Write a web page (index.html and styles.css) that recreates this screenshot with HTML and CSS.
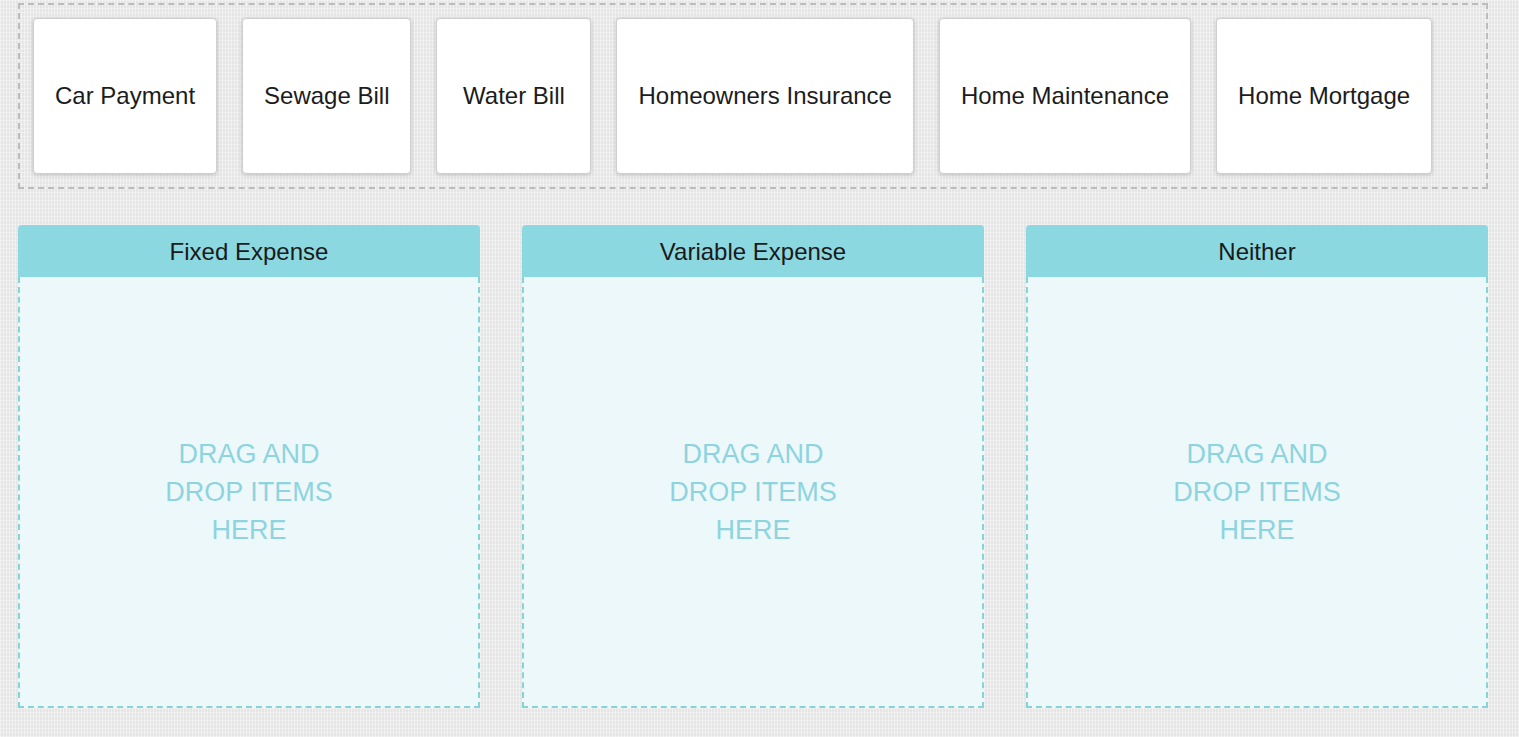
FILE: index.html
```html
<!DOCTYPE html>
<html>
<head>
<meta charset="utf-8">
<link rel="stylesheet" href="styles.css">
</head>
<body>
<div class="page">
  <div class="bank">
    <div class="card">Car Payment</div>
    <div class="card">Sewage Bill</div>
    <div class="card">Water Bill</div>
    <div class="card">Homeowners Insurance</div>
    <div class="card">Home Maintenance</div>
    <div class="card">Home Mortgage</div>
  </div>
  <div class="zones">
    <div class="zone">
      <div class="zone-head">Fixed Expense</div>
      <div class="zone-body"><span class="hint">DRAG AND<br>DROP ITEMS<br>HERE</span></div>
    </div>
    <div class="zone">
      <div class="zone-head">Variable Expense</div>
      <div class="zone-body"><span class="hint">DRAG AND<br>DROP ITEMS<br>HERE</span></div>
    </div>
    <div class="zone">
      <div class="zone-head">Neither</div>
      <div class="zone-body"><span class="hint">DRAG AND<br>DROP ITEMS<br>HERE</span></div>
    </div>
  </div>
</div>
</body>
</html>
```
FILE: styles.css
```css
html, body {
  margin: 0;
  padding: 0;
}
body {
  background-color: #ebebeb;
  background-image:
    repeating-linear-gradient(90deg, rgba(255,255,255,0.35) 0 1px, rgba(0,0,0,0.01) 1px 3px),
    repeating-linear-gradient(0deg, rgba(255,255,255,0.25) 0 1px, rgba(0,0,0,0.01) 1px 4px);
  font-family: "Liberation Sans", Arial, sans-serif;
  height: 737px;
  overflow: hidden;
}
.page {
  width: 1470px;
  padding: 3px 0 0 18px;
}
.bank {
  border: 2px dashed #bcbcbc;
  padding: 13px;
  display: flex;
  gap: 25px;
  align-items: stretch;
}
.card {
  height: 154px;
  min-width: 111px;
  padding: 0 21px;
  display: flex;
  align-items: center;
  justify-content: center;
  background: #fff;
  border: 1px solid #cfcfcf;
  border-radius: 4px;
  box-shadow: 0 1px 4px rgba(0,0,0,0.18);
  font-size: 24px;
  color: #1c1c1c;
  white-space: nowrap;
}
.zones {
  margin-top: 36px;
  display: flex;
  gap: 42px;
}
.zone {
  width: 462px;
  display: flex;
  flex-direction: column;
}
.zone-head {
  height: 50px;
  padding-top: 2px;
  background: #8cd8e1;
  border-radius: 4px 4px 0 0;
  display: flex;
  align-items: center;
  justify-content: center;
  font-size: 24px;
  color: #1a1a1a;
}
.zone-body {
  height: 429px;
  background: #edf8fa;
  border: 2px dashed #86d3d8;
  border-top: none;
  display: flex;
  align-items: center;
  justify-content: center;
}
.hint {
  text-align: center;
  font-size: 27px;
  line-height: 38px;
  color: #8dd4df;
}
```
